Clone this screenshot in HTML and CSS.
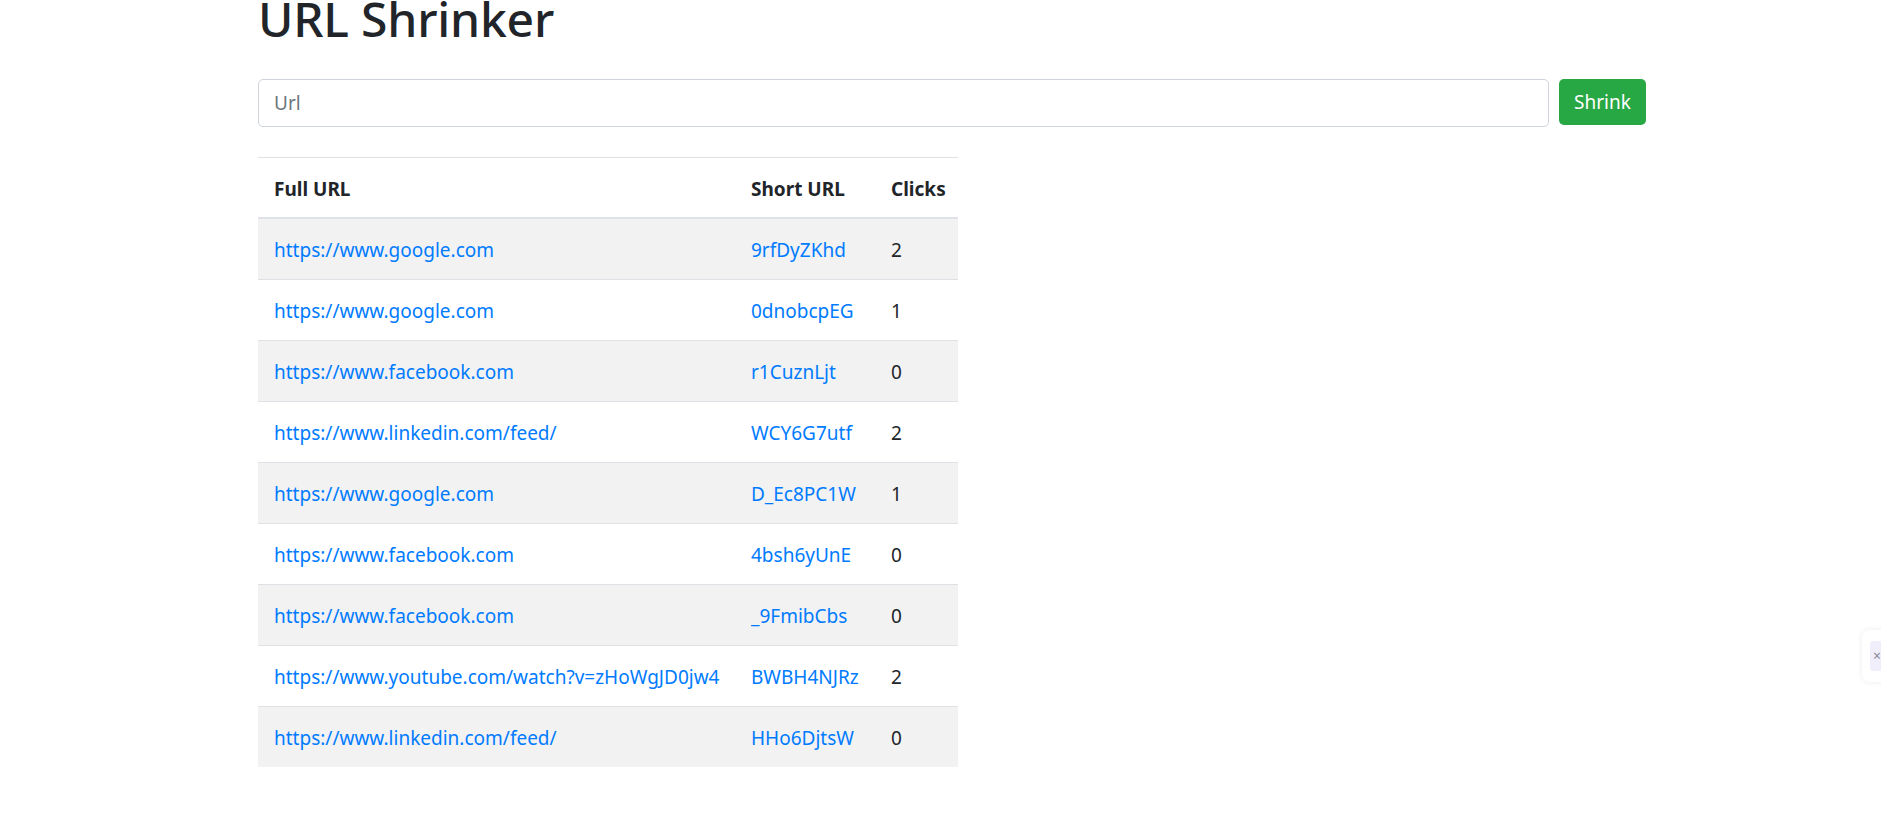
FILE: index.html
```html
<!DOCTYPE html>
<html>
<head>
<meta charset="utf-8">
<title>URL Shrinker</title>
<link rel="stylesheet" href="styles.css">
</head>
<body>
<div class="container">
  <h1 class="title">URL Shrinker</h1>
  <form class="shrink-form">
    <input class="url-input" type="text" placeholder="Url">
    <button class="btn-shrink" type="button">Shrink</button>
  </form>
  <table class="urls">
    <thead>
      <tr><th class="c-full">Full URL</th><th class="c-short">Short URL</th><th class="c-clicks">Clicks</th></tr>
    </thead>
    <tbody>
      <tr><td><a href="#">https://www.google.com</a></td><td><a href="#">9rfDyZKhd</a></td><td>2</td></tr>
      <tr><td><a href="#">https://www.google.com</a></td><td><a href="#">0dnobcpEG</a></td><td>1</td></tr>
      <tr><td><a href="#">https://www.facebook.com</a></td><td><a href="#">r1CuznLjt</a></td><td>0</td></tr>
      <tr><td><a href="#">https://www.linkedin.com/feed/</a></td><td><a href="#">WCY6G7utf</a></td><td>2</td></tr>
      <tr><td><a href="#">https://www.google.com</a></td><td><a href="#">D_Ec8PC1W</a></td><td>1</td></tr>
      <tr><td><a href="#">https://www.facebook.com</a></td><td><a href="#">4bsh6yUnE</a></td><td>0</td></tr>
      <tr><td><a href="#">https://www.facebook.com</a></td><td><a href="#">_9FmibCbs</a></td><td>0</td></tr>
      <tr><td><a href="#">https://www.youtube.com/watch?v=zHoWgJD0jw4</a></td><td><a href="#">BWBH4NJRz</a></td><td>2</td></tr>
      <tr><td><a href="#">https://www.linkedin.com/feed/</a></td><td><a href="#">HHo6DjtsW</a></td><td>0</td></tr>
    </tbody>
  </table>
</div>
<div class="side-widget"><span class="side-inner">×</span></div>
</body>
</html>
```
FILE: styles.css
```css
html, body {
  margin: 0;
  padding: 0;
  background: #fff;
  overflow: hidden;
}
body {
  font-family: "Noto Sans", "Open Sans", sans-serif;
  font-size: 19px;
  line-height: 1.5;
  color: #212529;
}
.container {
  width: 1388px;
  margin-left: 258px;
}
.title {
  font-size: 48px;
  font-weight: 500;
  line-height: 60px;
  margin: -11px 0 0 0;
  letter-spacing: -0.2px;
}
.shrink-form {
  display: flex;
  gap: 10px;
  margin: 30px 0 30px 0;
}
.url-input {
  flex: 1;
  height: 48px;
  box-sizing: border-box;
  border: 1px solid #ced4da;
  border-radius: 5px;
  padding: 0 15px;
  font-family: inherit;
  font-size: 19px;
  color: #495057;
  outline: none;
}
.url-input::placeholder {
  color: #6c757d;
}
.btn-shrink {
  width: 87px;
  height: 46px;
  border: none;
  border-radius: 5px;
  background: #28a745;
  color: #fff;
  font-family: inherit;
  font-size: 19px;
  padding: 0;
}
.urls {
  border-collapse: collapse;
  width: 700px;
  table-layout: fixed;
}
.urls th, .urls td {
  text-align: left;
  padding: 16px 15px 14px 16px;
  line-height: 30px;
  border-top: 1px solid #dee2e6;
  white-space: nowrap;
}
.urls th {
  font-weight: 700;
  padding-top: 16px;
  padding-bottom: 13px;
  border-bottom: 2px solid #dee2e6;
}
.c-full { width: 446px; }
.c-short { width: 109px; }
.c-clicks { width: 52px; }
.urls tbody tr:nth-child(odd) {
  background: #f2f2f2;
}
.urls td {
  height: 30px;
}
.urls a {
  color: #007bff;
  text-decoration: none;
}
.side-widget {
  position: fixed;
  left: 1862px;
  top: 630px;
  width: 50px;
  height: 52px;
  background: #fff;
  border-radius: 8px;
  box-shadow: 0 0 6px rgba(0,0,0,0.08);
  display: flex;
  align-items: center;
  padding-left: 8px;
  box-sizing: border-box;
}
.side-inner {
  display: block;
  width: 24px;
  height: 30px;
  background: #f0eefa;
  border-radius: 3px;
  color: #8a8a9a;
  font-size: 14px;
  line-height: 30px;
  padding-left: 3px;
}
```
